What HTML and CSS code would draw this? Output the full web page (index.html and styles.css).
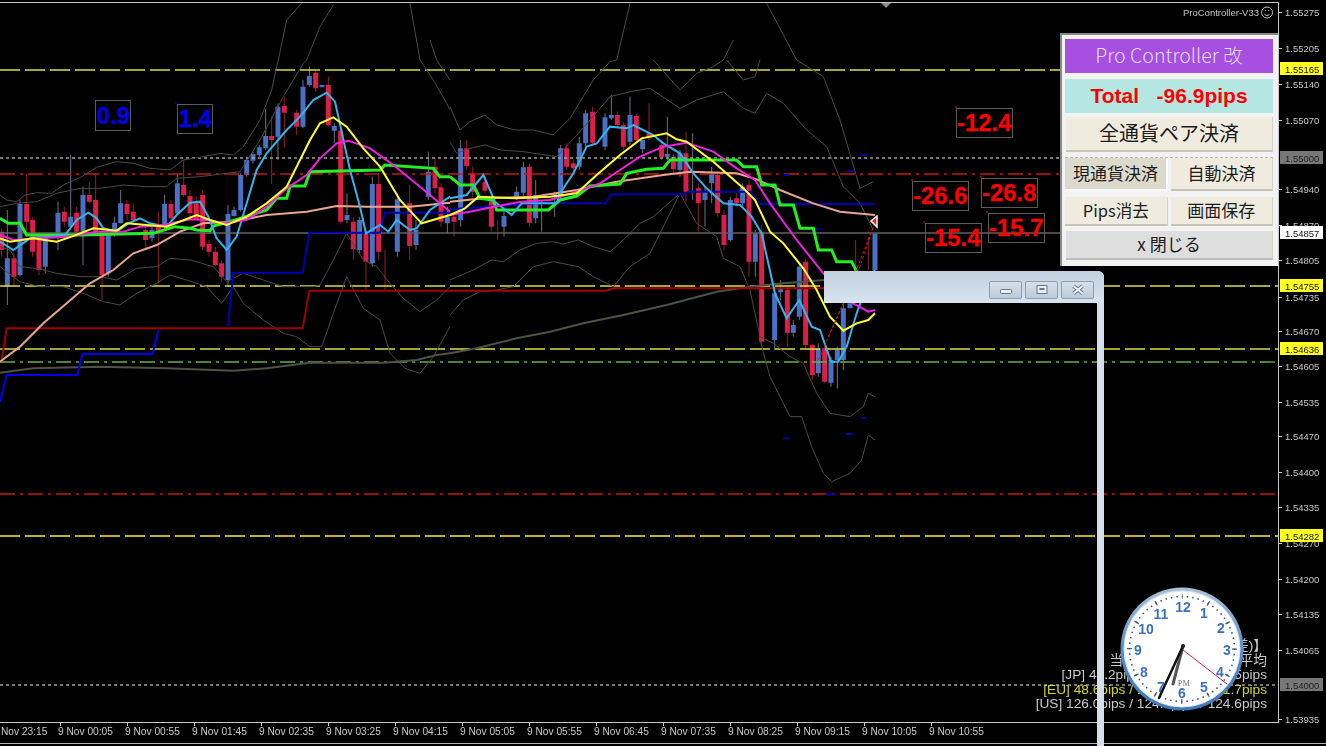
FILE: index.html
```html
<!DOCTYPE html>
<html lang="ja">
<head>
<meta charset="utf-8">
<title>ProController</title>
<link rel="stylesheet" href="styles.css">
</head>
<body>
<div class="terminal">
  <div class="chart-row">
    <svg class="plot" width="1279" height="720" viewBox="0 2 1279 720">
      <g transform="translate(0 60) scale(.33333)">
        <path class="wick-b" d="M22 450V735M60 420V650M136 530V640M174 425V570M212 285V510M249 380V615M325 520V650M344 470V530M362 390V490M456 500V545M494 405V510M532 340V465M684 435V680M702 440V470M722 340V455M740 290V350M759 275V310M778 255V290M797 148V270M834 130V300M909 60V205M928 20V80M1003 190V250M1041 400V490M1079 470V580M1117 350V620M1192 400V590M1248 480V570M1285 275V420M1342 440V520"/>
        <path class="wick-r" d="M5 505V590M42 580V680M80 342V530M98 470V590M117 515V645M193 440V500M230 440V530M268 365V430M287 340V520M306 510V720M381 420V480M400 430V490M437 495V570M475 455V670M513 420V480M551 300V410M570 390V480M589 410V480M608 390V570M627 540V590M646 560V620M665 600V665M815 170V372M853 110V262M890 150V225M947 30V95M985 50V200M1022 205V490M1060 470V598M1098 510V690M1136 340V600M1155 570V690M1229 375V600M1305 295V400M1323 370V500"/>
        <path class="body-b" d="M22 595V680M60 432V645M136 530V620M174 458V520M212 470V500M249 405V515M325 520V640M344 488V520M362 430V490M456 510V535M494 432V500M532 370V460M684 462V660M702 450V468M722 345V450M740 300V345M759 282V302M778 262V285M797 228V265M834 140V230M909 80V200M928 48V75M966 75V82M1003 198V212M1041 465V480M1079 480V570M1117 372V610M1192 418V575M1248 510V555M1285 335V410M1342 470V490"/>
        <path class="body-r" d="M5 515V570M42 595V650M80 432V485M98 480V575M117 525V630M193 455V485M230 458V515M268 405V425M287 420V515M306 515V645M381 432V462M400 455V480M437 510V540M475 500V520M513 432V475M551 375V405M570 408V460M589 430V480M608 405V560M627 552V575M646 575V615M665 610V650M815 228V240M853 138V158M890 158V200M947 38V85M985 75V195M1022 212V485M1060 485V568M1098 520V605M1136 372V575M1229 430V558M1305 320V385M1323 382V485"/>
      </g>
      <g transform="translate(450 60) scale(.33333)">
        <path class="wick-b" d="M32 240V500M162 440V530M200 380V420M220 305V410M257 360V490M275 420V515M314 395V470M332 255V420M388 230V330M407 150V260M465 160V270M484 105V180M540 110V255M578 230V280M652 170V300M690 270V350M728 220V420M765 380V500M785 320V430M841 410V545M878 370V440M916 510V650M974 680V870M992 660V720M1030 780V830M1048 610V780M1105 850V950M1143 890V980M1162 860V985M1180 730V930"/>
        <path class="wick-r" d="M50 240V330M12 460V530M68 320V410M105 350V400M124 400V515M143 480V540M238 310V500M350 250V330M370 300V340M428 140V255M502 155V205M520 185V270M559 160V250M597 130V240M635 240V300M670 280V340M708 215V425M745 370V515M803 335V470M822 450V570M860 400V440M897 360V650M935 495V860M1012 680V860M1067 595V870M1087 850V960M1124 860V970M1217 540V630M1255 530V630"/>
        <path class="body-b" d="M32 265V480M162 468V500M200 395V410M220 322V398M257 405V475M314 400V410M332 265V405M388 250V320M407 160V250M465 172V260M484 165V175M540 165V245M578 240V268M652 282V290M690 280V330M765 395V420M785 342V370M841 420V540M878 380V430M916 520V605M974 700V840M992 688V697M1030 795V818M1048 620V770M1105 865V940M1143 900V968M1162 870V900M1180 745V900M1200 730V745M1275 520V630"/>
        <path class="body-r" d="M12 470V485M50 265V318M68 340V395M105 365V392M124 420V500M238 320V488M350 265V320M370 310V325M428 155V248M502 165V195M520 195V260M559 168V240M597 220V235M635 255V292M670 290V328M708 280V395M745 385V430M803 345V460M822 465V555M860 415V430M897 375V605M935 515V845M1012 690V818M1067 605V855M1087 855V945M1124 865V965"/>
      </g>

      <path class="axis-line" d="M0 2.500H1278.500V722"/>
      <path class="hl hl-yellow" d="M0 70H1278M0 286H1278M0 349H1278"/>
      <path class="hl hl-bright" d="M0 536H1278"/>
      <path class="hl hl-dot" d="M0 158H1278M0 685H1278"/>
      <path class="hl hl-red" d="M0 174H1278M0 494H1278"/>
      <path class="hl hl-solid" d="M0 233H1278"/>
      <path class="hl hl-green" d="M0 362H1278"/>

      <g transform="translate(0 60) scale(.33333)">
        <path class="bb" d="M0 405L20 420 50 425 75 405 110 398 155 400 190 375 245 350 290 322 350 305 400 310 450 325 510 330 550 300 610 290 660 280 700 285 730 260 780 180 815 90 830 20 835 0"/>
        <path class="bb" d="M0 440L50 430 110 425 170 400 240 385 300 385 370 375 440 380 500 380 530 355 600 350 680 340 720 335 780 240 850 110 910 10 920 0"/>
        <path class="bb" d="M0 560L30 570 60 620 110 625 170 640 240 650 300 650 350 660 410 625 470 620 510 595 570 600 640 620 680 665 730 640 790 660 850 680 940 680 960 675 1000 600 1040 520 1090 600 1130 620 1170 670 1210 715 1260 755 1310 720 1350 680"/>
        <path class="bb" d="M0 620L60 665 120 680 190 680 250 700 310 725 360 735 410 700 470 670 510 645 560 660 620 680 665 730 700 680 730 730 790 780 850 820 890 830 930 860 965 860 1000 760 1040 650 1090 745 1140 780 1170 880 1215 925 1260 940 1300 890 1350 800"/>
        <path class="bb" d="M1260 0L1300 60 1340 130 1350 150M1310 0L1350 60"/>
        <path class="bb" d="M835 0L860 -120 905 -170M920 0L960 -100 1000 -165M1260 0L1230 -170M1310 0L1290 -60"/>
        <path class="step-olive" d="M0 938L100 925 300 920 500 925 700 932 800 925 930 908 1150 908 1250 900 1310 885 1350 880"/>
        <path class="step-red" d="M5 905L20 805H908L928 692H1350"/>
        <path class="step-blue" d="M0 1025L20 945H232L247 882H458L475 810"/>
        <path class="step-navy" d="M684 800L700 638H908L928 518H1140L1155 458H1350"/>
        <path class="ma-salmon" d="M0 905L60 860 130 790 200 730 270 670 340 630 400 580 470 555 540 515 610 490 700 485 800 465 920 455 1010 438 1100 440 1230 440 1350 428"/>
        <path class="ma-green" d="M0 475L25 490H60L80 525H240L460 520 525 500 570 505 590 510 630 512 640 498 690 485 800 450 830 415H860L870 378H915L930 335 1140 330 1155 315 1300 325 1320 350H1350"/>
        <path class="ma-cyan" d="M0 545L40 570 90 535 150 530 195 525 230 480 265 458 290 475 310 505 350 515 385 490 420 475 450 490 500 500 530 465 570 428 600 425 625 470 650 535 680 570 710 530 740 430 770 330 800 280 860 210 900 170 940 120 980 98 1005 125 1025 215 1050 330 1080 440 1098 520 1140 495 1165 515 1190 480 1230 510 1250 505 1290 450 1350 410"/>
        <path class="ma-magenta" d="M0 525L40 540 120 535 200 530 290 515 370 515 420 500 490 495 570 478 620 480 670 490 740 480 800 440 860 385 920 345 960 295 1010 250 1045 242 1110 265 1180 315 1260 380 1350 455"/>
        <path class="ma-yellow" d="M0 535L30 545 100 535 170 545 215 530 280 505 350 512 380 490 440 495 500 500 590 465 630 480 680 495 740 470 800 430 860 380 890 320 930 240 960 190 1000 172 1040 200 1090 265 1140 320 1200 420 1265 490 1350 465"/>
      </g>
      <g transform="translate(450 60) scale(.33333)">
        <path class="bb" d="M0 140L30 210 60 185 105 165 140 195 195 210 250 210 310 225 360 175 430 60 480 5 500 0 540 -170M610 0L690 90 740 40 790 20 820 0 850 -60M930 0L915 50 880 60 830 0M1040 0L1120 50 1170 180 1230 385 1270 365M1040 0L950 -170"/>
        <path class="bb" d="M0 245L20 280 60 265 105 255 150 270 220 275 320 290 390 215 480 110 540 95 600 85 690 145 740 120 820 95 880 145 915 160 950 100 1000 130 1070 210 1130 260 1180 380 1230 430 1270 510"/>
        <path class="bb" d="M0 660L70 630 125 600 160 605 210 570 260 550 310 545 340 552 385 540 430 560 480 575 520 540 570 490 610 470 690 400 740 490 770 510 800 530 820 595 870 620 900 690 930 830 970 850 1020 890 1060 910 1100 1000 1140 1060 1200 1070 1240 1040 1255 1000 1275 1010"/>
        <path class="bb" d="M0 765L40 720 90 695 140 690 190 680 250 620 310 605 385 620 430 650 490 680 540 620 600 580 690 400M930 840L960 950 1020 1070 1055 1070 1085 1160 1120 1240 1145 1265 1200 1240 1235 1200 1255 1125 1275 1140"/>
        <path class="step-olive" d="M0 880L80 865 200 835 300 815 400 790 520 765 650 735 800 695 900 680 1000 670 1125 660"/>
        <path class="step-red" d="M0 692H470L490 685H1125"/>
        <path class="step-navy" d="M0 448L260 430H465L485 403H700L715 395H900L930 432H1275"/>
        <path class="ma-salmon" d="M0 425L100 415 250 410 380 390 500 365 640 345 720 335 860 340 920 358 990 390 1090 430 1170 455 1275 465"/>
        <path class="ma-green" d="M0 350L30 375H70L90 415 130 420 140 450H295L330 420 380 408 420 378 510 372 530 340 590 328 640 325 660 300H860L880 320H920L935 375H975L990 435H1030L1050 505H1090L1105 570H1145L1160 605H1205L1220 635"/>
        <path class="ma-cyan" d="M0 415L50 405 100 345 135 425 185 465 215 430 320 430 330 400 370 340 410 260 440 250 480 200 530 205 550 195 610 225 640 250 690 280 730 340 770 385 820 430 870 435 905 470 935 520 975 700 1010 775 1048 720 1085 800 1110 810 1143 905H1165L1190 860 1220 760 1260 650 1275 630"/>
        <path class="ma-magenta" d="M0 465L60 455 130 440 215 425 300 420 380 395 450 370 510 330 570 290 640 260 710 248 790 275 860 325 915 360 960 430 1040 540 1120 640 1200 725 1255 755 1275 750"/>
        <path class="ma-yellow" d="M0 465L45 445 85 410 200 415 300 410 380 400 440 345 510 285 575 235 650 220 680 238 710 245 790 305 880 385 915 420 960 515 1000 550 1060 625 1100 690 1140 770 1180 812 1220 790 1255 780 1275 760"/>
        <path class="trade" d="M1105 900L1180 730 1270 500M1135 830L1230 620 1272 495"/>
        <path class="mark" d="M1238 285H1250M1190 332H1212M1000 345H1020M1095 508H1115"/>
      </g>
      <path class="mark" d="M783 438.500H790M846 434H853M861 418H866M825 494.500H836M860 155H866M847 171H853"/>
      <path class="arrow" d="M871 221L877 216V227Z"/>
      <path class="top-notch" d="M881 3H891L886 8Z"/>

      <g class="pip-blue">
        <rect x="95.500" y="100.500" width="35" height="30"/><circle cx="94" cy="99" r=".8"/><text x="113" y="124">0.9</text>
        <rect x="177.500" y="104.500" width="35" height="29"/><circle cx="176" cy="103" r=".8"/><text x="195" y="127">1.4</text>
      </g>
      <g class="pip-red">
        <rect x="956.500" y="108.500" width="56" height="29"/><circle cx="956" cy="107" r=".8"/><text x="984.500" y="131">-12.4</text>
        <rect x="912.500" y="181.500" width="56" height="29"/><circle cx="912" cy="180" r=".8"/><text x="940.500" y="204">-26.6</text>
        <rect x="981.500" y="178.500" width="56" height="29"/><circle cx="981" cy="177" r=".8"/><text x="1009.500" y="201">-26.8</text>
        <rect x="925.500" y="223.500" width="56" height="29"/><circle cx="924" cy="222" r=".8"/><text x="953.500" y="246">-15.4</text>
        <rect x="988.500" y="213.500" width="56" height="29"/><circle cx="987" cy="212" r=".8"/><text x="1016.500" y="236">-15.7</text>
      </g>
      <text class="ea-name" x="1259" y="16" text-anchor="end">ProController-V33</text>
      <g class="smiley">
        <circle cx="1267" cy="12.500" r="5.500"/>
        <path d="M1264.500 14.500Q1267 16.800 1269.500 14.500M1264.800 10.500H1265.800M1268.200 10.500H1269.200"/>
      </g>
    </svg>

    <svg class="price-axis" width="47" height="720" viewBox="1279 2 47 720">
      <path class="ticks" d="M1278 12.500h4M1278 48.500h4M1278 84.500h4M1278 120.500h4M1278 189.500h4M1278 225.500h4M1278 260.500h4M1278 297.500h4M1278 331.500h4M1278 366.500h4M1278 402.500h4M1278 436.500h4M1278 472.500h4M1278 507.500h4M1278 543.500h4M1278 579.500h4M1278 614.500h4M1278 650.500h4M1278 719.500h4"/>
      <g class="price">
        <text x="1285" y="16">1.55275</text><text x="1285" y="52">1.55205</text><text x="1285" y="88">1.55140</text><text x="1285" y="124">1.55070</text><text x="1285" y="193">1.54940</text><text x="1285" y="229">1.54870</text><text x="1285" y="264">1.54805</text><text x="1285" y="301">1.54735</text><text x="1285" y="335">1.54670</text><text x="1285" y="370">1.54605</text><text x="1285" y="406">1.54535</text><text x="1285" y="440">1.54470</text><text x="1285" y="476">1.54400</text><text x="1285" y="511">1.54335</text><text x="1285" y="547">1.54270</text><text x="1285" y="583">1.54200</text><text x="1285" y="618">1.54135</text><text x="1285" y="654">1.54065</text><text x="1285" y="723">1.53935</text>
      </g>
      <g class="tag tag-yellow">
        <rect x="1280" y="62" width="43" height="13"/><text x="1285" y="72.500">1.55165</text>
        <rect x="1280" y="279" width="43" height="13"/><text x="1285" y="289.500">1.54755</text>
        <rect x="1280" y="342" width="43" height="13"/><text x="1285" y="352.500">1.54636</text>
        <rect x="1280" y="529" width="43" height="13"/><text x="1285" y="539.500">1.54282</text>
      </g>
      <g class="tag tag-gray">
        <rect x="1280" y="151" width="43" height="13"/><text x="1285" y="161.500">1.55000</text>
        <rect x="1280" y="678" width="43" height="13"/><text x="1285" y="688.500">1.54000</text>
      </g>
      <g class="tag tag-white">
        <rect x="1280" y="226" width="43" height="13"/><text x="1285" y="236.500">1.54857</text>
      </g>
    </svg>
  </div>

  <div class="time-axis">
    <span class="time time-first">Nov 23:15</span>
    <span class="time">9 Nov 00:05</span>
    <span class="time">9 Nov 00:55</span>
    <span class="time">9 Nov 01:45</span>
    <span class="time">9 Nov 02:35</span>
    <span class="time">9 Nov 03:25</span>
    <span class="time">9 Nov 04:15</span>
    <span class="time">9 Nov 05:05</span>
    <span class="time">9 Nov 05:55</span>
    <span class="time">9 Nov 06:45</span>
    <span class="time">9 Nov 07:35</span>
    <span class="time">9 Nov 08:25</span>
    <span class="time">9 Nov 09:15</span>
    <span class="time">9 Nov 10:05</span>
    <span class="time">9 Nov 10:55</span>
  </div>

  <div class="session-stats">
    <div>【当日 / 過去平均(差)】</div>
    <div>当日&nbsp; / 昨日 / 過去5日平均</div>
    <div>[JP] 45.2pips / 43.9pips / 42.5pips</div>
    <div class="eu">[EU] 48.6pips / 100.5pips / 101.7pips</div>
    <div>[US] 126.0pips / 124.8pips / 124.6pips</div>
  </div>

  <div class="window">
    <div class="titlebar">
      <span class="win-btn"><svg width="14" height="12" viewBox="0 0 14 12"><rect class="glyph" x="1.500" y="5.500" width="11" height="4" rx="1"/></svg></span>
      <span class="win-btn"><svg width="14" height="12" viewBox="0 0 14 12"><rect class="glyph" x="2" y="1.500" width="10" height="8"/><rect class="glyph-in" x="4.500" y="4" width="5" height="2"/></svg></span>
      <span class="win-btn"><svg width="14" height="12" viewBox="0 0 14 12"><path class="glyph-x-out" d="M2.500 2L11.500 9.500M11.500 2L2.500 9.500"/><path class="glyph-x" d="M2.500 2L11.500 9.500M11.500 2L2.500 9.500"/></svg></span>
    </div>
  </div>

  <div class="panel">
    <div class="banner banner-title">Pro Controller 改</div>
    <div class="banner banner-total">Total&nbsp;&nbsp; -96.9pips</div>
    <div class="btn btn-wide">全通貨ペア決済</div>
    <div class="btn-row btn-row-tall">
      <div class="btn btn-pressed">現通貨決済</div>
      <div class="btn">自動決済</div>
    </div>
    <div class="btn-row">
      <div class="btn btn-small">Pips消去</div>
      <div class="btn">画面保存</div>
    </div>
    <div class="btn btn-close">x 閉じる</div>
  </div>

  <svg class="clock" width="124" height="124" viewBox="-62 -62 124 124">
    <defs>
      <linearGradient id="rim" x1="0" y1="0" x2="0" y2="1">
        <stop offset="0" stop-color="#a9c3da"/>
        <stop offset=".5" stop-color="#5c8fc4"/>
        <stop offset="1" stop-color="#3f79b8"/>
      </linearGradient>
    </defs>
    <circle class="clock-rim" r="61.500"/>
    <circle class="clock-face" r="58"/>
    <circle class="clock-hours" r="52.500" transform="rotate(-90)"/>
    <circle class="clock-dots" r="52.500" transform="rotate(-90)"/>
    <g class="clock-num">
      <text x="1" y="-37">12</text><text x="22" y="-31">1</text><text x="39" y="-16">2</text><text x="45" y="6">3</text><text x="38" y="28">4</text><text x="22" y="43">5</text><text x="0" y="49">6</text><text x="-21" y="43">7</text><text x="-38" y="28">8</text><text x="-44" y="6">9</text><text x="-36" y="-15">10</text><text x="-21" y="-30">11</text>
    </g>
    <text class="clock-pm" x="2" y="37">PM</text>
    <path class="hand-hour" d="M1 -3L-9 35"/>
    <path class="hand-min" d="M1 -3L-23 49"/>
    <path class="hand-sec" d="M1 1L45 35"/>
    <circle class="clock-pin" cx="1" cy="-3" r="2"/>
  </svg>
</div>
</body>
</html>
```
FILE: styles.css
```css
* { box-sizing: border-box; }
html, body { margin: 0; height: 100%; background: #000; }
body { overflow: hidden; font-family: "Liberation Sans", Arial, sans-serif; }

.terminal {
  position: relative;
  width: 1326px;
  height: 746px;
  padding-top: 2px;
  overflow: hidden;
  filter: blur(.45px);
}

.chart-row { display: flex; height: 720px; }
.plot { display: block; flex: none; }
.price-axis { display: block; flex: none; overflow: visible; }

.plot path { fill: none; vector-effect: non-scaling-stroke; }

.body-b { stroke: #4a70c4; stroke-width: 5; }
.body-r { stroke: #dc1f48; stroke-width: 5; }
.wick-b { stroke: #6d7480; stroke-width: 1; }
.wick-r { stroke: #8e2032; stroke-width: 1; }

.axis-line { stroke: #c8c8c8; stroke-width: 1; }
.hl { stroke-width: 1.300; }
.hl-yellow { stroke: #dcdc46; stroke-dasharray: 20 5; }
.hl-bright { stroke: #f0f03c; stroke-dasharray: 20 5; }
.hl-dot { stroke: #a0a0a0; stroke-dasharray: 3 3; }
.hl-red { stroke: #c01818; stroke-dasharray: 15 5 3 5; }
.hl-solid { stroke: #626262; }
.hl-green { stroke: #68b044; stroke-dasharray: 15 5 3 5; }

.bb { stroke: #4a4a4a; stroke-width: 1; }
.step-olive { stroke: #4c5244; stroke-width: 2; }
.step-red { stroke: #a00000; stroke-width: 2; }
.step-blue { stroke: #0000ee; stroke-width: 2; }
.step-navy { stroke: #0000b4; stroke-width: 2; }
.ma-salmon { stroke: #e8a68e; stroke-width: 2; }
.ma-green { stroke: #22f022; stroke-width: 3; }
.ma-cyan { stroke: #35b4ea; stroke-width: 2; }
.ma-magenta { stroke: #f020e0; stroke-width: 2; }
.ma-yellow { stroke: #ffff30; stroke-width: 2; }
.trade { stroke: #c01c1c; stroke-width: 1; stroke-dasharray: 3 2; }
.mark { stroke: #0000a0; stroke-width: 2; }
.plot .arrow { fill: #ee2020; stroke: #f4f4f4; stroke-width: 1.5; }
.plot .top-notch { fill: #8a8a8a; }

.pip-blue rect, .pip-red rect { fill: none; stroke: #5a5a5a; stroke-width: 1; }
.pip-blue circle { fill: #0000ee; }
.pip-red circle { fill: #ee2020; }
.pip-blue text, .pip-red text { font-size: 24px; font-weight: 700; text-anchor: middle; stroke-width: .4px; }
.pip-blue text { fill: #0000ee; stroke: #0000ee; }
.pip-red text { fill: #ff0000; stroke: #ff0000; }

.ea-name { fill: #c4c4c4; font-size: 9.5px; }
.smiley circle { fill: none; stroke: #c4c4c4; stroke-width: 1; }
.plot .smiley path { stroke: #c4c4c4; stroke-width: 1; }

.ticks { stroke: #c8c8c8; stroke-width: 1; fill: none; }
.price text { fill: #c8c8c8; font-size: 9.5px; }
.tag text { font-size: 9.5px; }
.tag-yellow rect { fill: #ffff22; }
.tag-yellow text { fill: #111; }
.tag-gray rect { fill: #777; }
.tag-gray text { fill: #222; }
.tag-white rect { fill: #fff; }
.tag-white text { fill: #111; }

.time-axis {
  display: flex;
  align-items: center;
  height: 22px;
  width: 1326px;
  padding-bottom: 2px;
  border-bottom: 1px solid #b0b0b0;
  background:
    linear-gradient(#c8c8c8, #c8c8c8) 0 0 / 1279px 1px no-repeat,
    repeating-linear-gradient(90deg, #c8c8c8 0 1px, transparent 1px 67px) 60px 0 / 872px 4px no-repeat;
  color: #c8c8c8;
  font-size: 10.2px;
}
.time { flex: none; width: 67px; white-space: nowrap; }
.time-first { width: 58px; padding-left: 1px; }

.session-stats {
  position: absolute;
  right: 59px;
  top: 639px;
  color: #c9c9c9;
  font-size: 13.700px;
  line-height: 14.500px;
  text-align: right;
  white-space: nowrap;
  font-family: "Liberation Sans", "Noto Sans CJK JP", sans-serif;
}
.eu { color: #d6d61e; }

.window {
  position: absolute;
  left: 824px;
  top: 271px;
  width: 280px;
  height: 475px;
  border-right: 7px solid #d3e0ec;
  border-top-right-radius: 6px;
}
.titlebar {
  display: flex;
  justify-content: flex-end;
  gap: 3px;
  height: 32px;
  margin-right: -7px;
  padding: 10px 10px 3px 0;
  background: linear-gradient(#c2d0de, #d7e4ef);
  border-top-right-radius: 6px;
}
.win-btn {
  display: flex;
  align-items: center;
  justify-content: center;
  width: 33px;
  height: 18px;
  background: linear-gradient(#d6e0ea, #bccbd9);
  border: 1px solid #8e9fb0;
  border-radius: 2px;
}
.glyph { fill: #e6edf3; stroke: #6b7680; stroke-width: 1; }
.glyph-in { fill: #6b7680; }
.glyph-x-out { fill: none; stroke: #6b7680; stroke-width: 3.600; }
.glyph-x { fill: none; stroke: #eef3f7; stroke-width: 1.800; }

.panel {
  position: absolute;
  left: 1060px;
  top: 33px;
  width: 218px;
  height: 233px;
  display: flex;
  flex-direction: column;
  padding: 4px 5px 6px 5px;
  background: #f2f2f2;
  border-top: 2px solid #888;
  border-left: 2px solid #888;
  font-family: "Noto Sans CJK JP", "Liberation Sans", sans-serif;
  color: #1c1c1c;
}
.banner { display: flex; align-items: center; justify-content: center; flex: none; height: 34px; margin-bottom: 6px; margin-left: -2px; }
.banner-title { background: #a64fe0; color: #e4dcf2; font-size: 19.600px; font-weight: 300; padding-bottom: 3px; }
.banner-total {
  margin-bottom: 4px;
  background: #b6e6e1;
  color: #ff0000;
  font-family: "Liberation Sans", Arial, sans-serif;
  font-size: 21px;
  font-weight: 700;
}
.btn {
  display: flex;
  align-items: center;
  justify-content: center;
  flex: 1 1 0;
  padding-bottom: 2px;
  background: #efecdf;
  border-bottom: 2px solid #c6c4b8;
  border-right: 1px solid #d4d2c6;
  font-size: 17px;
  white-space: nowrap;
}
.btn-wide { flex: none; height: 35px; font-size: 20px; margin-bottom: 5px; margin-left: -1px; }
.btn-row { display: flex; flex: none; gap: 3px; height: 29px; margin-bottom: 5px; margin-left: -2px; }
.btn-row-tall { height: 34px; margin-bottom: 6px; border-top: 1px dashed #bbb; }
.btn-pressed { background: #dcd9cd; border-bottom: 2px solid #fff; border-right: 2px solid #fff; }
.btn-small { font-size: 16.500px; }
.btn-close { flex: none; height: 29px; background: #dedede; border-bottom-color: #bdbdbd; margin-left: -1px; }

.clock { position: absolute; left: 1120px; top: 586.500px; }
.clock-rim { fill: url(#rim); }
.clock-face { fill: #fff; stroke: #dbe6f0; stroke-width: 1; }
.clock-hours { fill: none; stroke: #5a5a5a; stroke-width: 5; stroke-dasharray: 1.200 26.289; stroke-dashoffset: .6; }
.clock-dots { fill: none; stroke: #37506b; stroke-width: 1.500; stroke-dasharray: 1.500 3.998; stroke-dashoffset: .75; }
.clock-num text { fill: #3b72c0; font-size: 14px; font-weight: 700; text-anchor: middle; }
.clock-pm { fill: #777; font-family: "Liberation Serif", serif; font-size: 8.500px; text-anchor: middle; }
.hand-hour { stroke: #555; stroke-width: 3; stroke-linecap: round; }
.hand-min { stroke: #111; stroke-width: 2.500; stroke-linecap: round; }
.hand-sec { stroke: #d81e4c; stroke-width: 1; }
.clock-pin { fill: #222; }
```
